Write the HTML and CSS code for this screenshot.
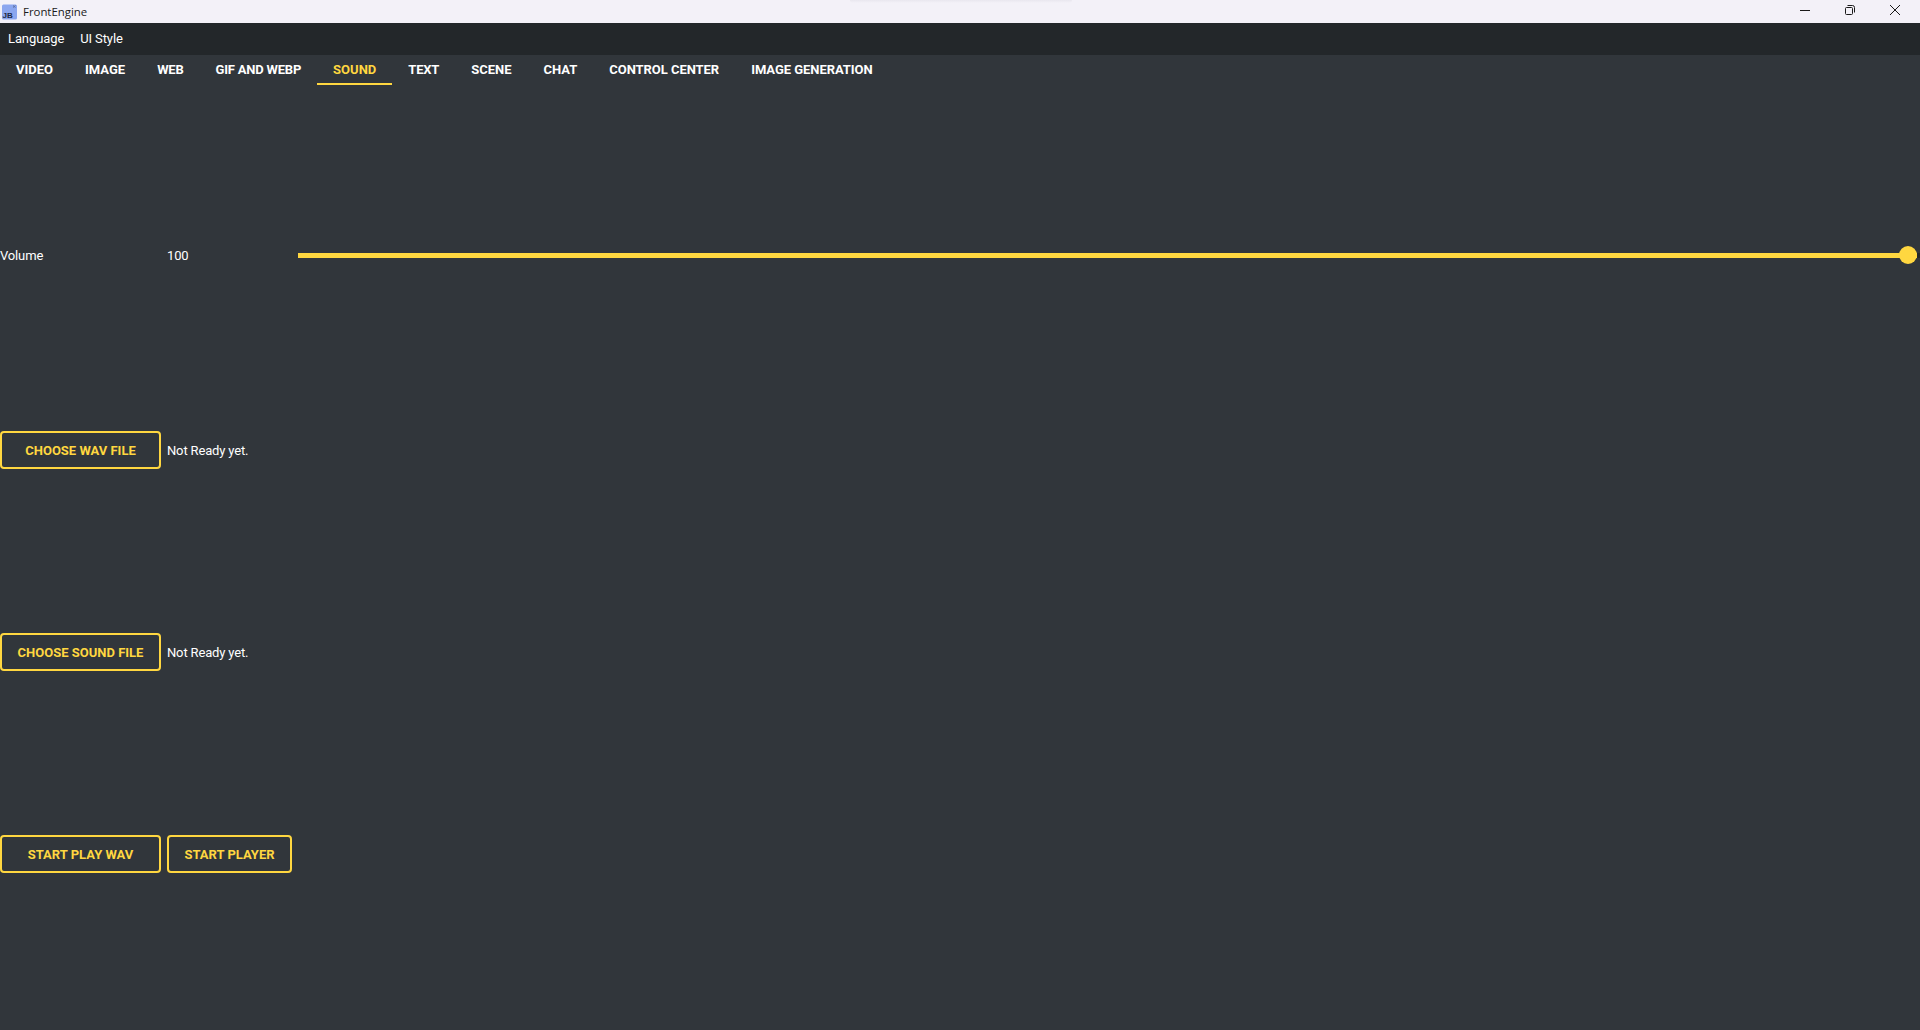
FILE: index.html
```html
<!DOCTYPE html>
<html lang="en">
<head>
<meta charset="utf-8">
<title>FrontEngine</title>
<link rel="stylesheet" href="styles.css">
</head>
<body>
<div class="window">
  <header class="titlebar">
    <div class="title-left">
      <svg class="app-icon" width="16" height="16" viewBox="0 0 16 16">
        <rect x="1" y="0.500" width="15" height="15" rx="1.500" fill="#8ba6ef"/>
        <path d="M12 1.500l2.500 2M14.500 1.500L12 3.500" stroke="#5f70a3" stroke-width="1" fill="none"/>
        <text class="app-icon-text" x="1.500" y="14">JB</text>
      </svg>
      <span class="app-name">FrontEngine</span>
    </div>
    <div class="controls">
      <svg width="12" height="12" viewBox="0 0 12 12"><path d="M1 6.500h10" stroke="#1a1a1a" fill="none"/></svg>
      <svg width="12" height="12" viewBox="0 0 12 12"><rect x="1.500" y="3.500" width="7" height="7" rx="1" stroke="#1a1a1a" fill="none"/><path d="M3.500 1.500h5a2 2 0 0 1 2 2v5" stroke="#1a1a1a" fill="none"/></svg>
      <svg width="12" height="12" viewBox="0 0 12 12"><path d="M1 1l10 10M11 1L1 11" stroke="#1a1a1a" fill="none"/></svg>
    </div>
    <div class="shadow"></div>
  </header>
  <nav class="menubar">
    <span class="menu-item">Language</span>
    <span class="menu-item">UI Style</span>
  </nav>
  <div class="tabs">
    <span class="tab">VIDEO</span>
    <span class="tab">IMAGE</span>
    <span class="tab tight">WEB</span>
    <span class="tab tight">GIF AND WEBP</span>
    <span class="tab active">SOUND</span>
    <span class="tab tight">TEXT</span>
    <span class="tab">SCENE</span>
    <span class="tab">CHAT</span>
    <span class="tab snug">CONTROL CENTER</span>
    <span class="tab snug">IMAGE GENERATION</span>
  </div>
  <main class="panel">
    <div class="row volume">
      <span class="label">Volume</span>
      <span class="label">100</span>
      <div class="slider"><div class="handle"></div></div>
    </div>
    <div class="row">
      <button class="btn wide">CHOOSE WAV FILE</button>
      <span class="label">Not Ready yet.</span>
    </div>
    <div class="row">
      <button class="btn wide">CHOOSE SOUND FILE</button>
      <span class="label">Not Ready yet.</span>
    </div>
    <div class="row">
      <button class="btn wide">START PLAY WAV</button>
      <button class="btn narrow">START PLAYER</button>
    </div>
  </main>
</div>
</body>
</html>
```
FILE: styles.css
```css
* { box-sizing: border-box; }
html, body { margin: 0; height: 100%; overflow: hidden; }
body { font-family: Roboto, "Liberation Sans", sans-serif; background: #31363b; color: #fff; }
.window { height: 1030px; display: flex; flex-direction: column; }

.titlebar {
  position: relative;
  height: 23px;
  background: #f3f1f8;
  display: flex;
  align-items: center;
  justify-content: space-between;
  flex: none;
}
.title-left { display: flex; align-items: center; }
.app-icon { margin-left: 1px; }
.app-icon-text { font: 700 8px "Liberation Sans", sans-serif; fill: #1e2a44; }
.app-name { margin-left: 6px; font: 11.4px "Open Sans", "Noto Sans", sans-serif; color: #1a1a1a; }
.controls { display: flex; gap: 33px; padding-right: 19px; align-items: center; margin-top: -3px; }
.shadow {
  position: absolute;
  left: 850px;
  top: 0;
  width: 222px;
  height: 3px;
  background: linear-gradient(#e9e7ef, #f3f1f8);
  border-radius: 0 0 8px 8px;
}

.menubar {
  height: 32px;
  background: #23272a;
  display: flex;
  align-items: center;
  gap: 16px;
  padding: 0 0 2px 8px;
  font-size: 13px;
  letter-spacing: -0.1px;
  flex: none;
}

.tabs { display: flex; flex: none; height: 30px; }
.tab {
  padding: 0 16px;
  height: 30px;
  line-height: 29px;
  font-size: 13px;
  font-weight: 700;
  border-bottom: 2px solid transparent;
}
.tab.active { color: #ffd740; border-bottom-color: #ffd740; }
.tab.tight { letter-spacing: -0.2px; }
.tab.snug { letter-spacing: -0.05px; }

.panel {
  flex: 1;
  display: grid;
  grid-template-rows: 188px 202px 202px 202px;
  align-content: start;
  padding-top: 76px;
}
.row {
  display: grid;
  grid-template-columns: 161px auto 1fr;
  column-gap: 6px;
  align-items: center;
}
.row.volume { grid-template-columns: 161px 125px 1fr; }
.label { font-size: 13px; color: #fff; letter-spacing: -0.15px; }
.slider {
  position: relative;
  height: 5px;
  align-self: start;
  margin-top: 92px;
  background: #ffd740;
  border-right: 3px solid #23272a;
}
.handle {
  position: absolute;
  right: 0;
  top: -7px;
  width: 18px;
  height: 18px;
  border-radius: 50%;
  background: #ffd740;
}
.btn {
  height: 38px;
  padding: 0;
  background: transparent;
  border: 2px solid #ffd740;
  border-radius: 4px;
  color: #ffd740;
  font: 700 13px Roboto, sans-serif;
}
.btn.wide { width: 161px; }
.btn.narrow { width: 125px; }
```
